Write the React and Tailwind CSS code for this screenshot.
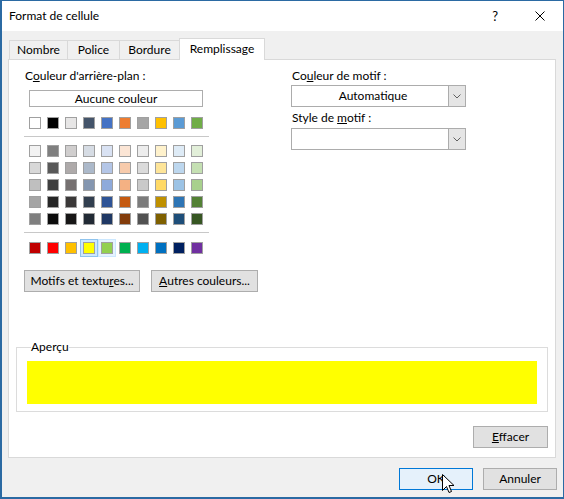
import React from "react";

const FONT = { fontFamily: 'Lato, "Noto Sans", sans-serif' };

const THEME = ["#ffffff", "#000000", "#e7e6e6", "#44546a", "#4472c4", "#ed7d31", "#a5a5a5", "#ffc000", "#5b9bd5", "#70ad47"];

const TINTS = [
  ["#f2f2f2", "#7f7f7f", "#d0cece", "#d6dce4", "#d9e2f3", "#fbe5d5", "#ededed", "#fff2cc", "#deebf6", "#e2efd9"],
  ["#d8d8d8", "#595959", "#aeaaaa", "#acb9ca", "#b4c6e7", "#f7cbac", "#dbdbdb", "#fee599", "#bdd7ee", "#c5e0b3"],
  ["#bfbfbf", "#3f3f3f", "#757070", "#8496b0", "#8eaadb", "#f4b183", "#c9c9c9", "#ffd965", "#9cc3e5", "#a8d08d"],
  ["#a5a5a5", "#262626", "#3a3838", "#323f4f", "#2f5496", "#c55a11", "#7b7b7b", "#bf9000", "#2e75b5", "#538135"],
  ["#7f7f7f", "#0c0c0c", "#171616", "#222a35", "#1f3864", "#833c0b", "#525252", "#7f6000", "#1e4e79", "#375623"],
];

const STANDARD = ["#c00000", "#ff0000", "#ffc000", "#ffff00", "#92d050", "#00b050", "#00b0f0", "#0070c0", "#002060", "#7030a0"];

function Swatch({ color, selected, hover }) {
  let ring = "";
  if (selected) ring = "shadow-[0_0_0_2px_#cce8ff,0_0_0_3px_#8fc4ee]";
  else if (hover) ring = "shadow-[0_0_0_2px_#e5f3ff,0_0_0_3px_#cce8ff]";
  return (
    <span
      className={`block w-[12px] h-[12px] border border-[#a0a0a0] ${ring}`}
      style={{ backgroundColor: color }}
    />
  );
}

function Tab({ label, width, active }) {
  if (active) {
    return (
      <div
        className={`${width} h-[22px] -ml-px -mb-px relative z-10 bg-white border border-b-0 border-[#d9d9d9] flex items-center justify-center pb-[2px]`}
      >
        {label}
      </div>
    );
  }
  return (
    <div
      className={`${width} h-[19px] -ml-px first:ml-0 border border-b-0 border-[#d9d9d9] flex items-center justify-center`}
    >
      {label}
    </div>
  );
}

function Combo({ value }) {
  return (
    <div className="w-[175px] h-[22px] bg-white border border-[#acacac] flex">
      <div className="flex-1 flex items-center justify-center pl-[6px]">{value}</div>
      <div className="w-[17px] h-full bg-[#e5e5e5] border-l border-[#acacac] flex items-center justify-center">
        <svg width="8" height="5" viewBox="0 0 8 5">
          <path d="M0.5 0.5 L4 4 L7.5 0.5" fill="none" stroke="#606060" strokeWidth="1" />
        </svg>
      </div>
    </div>
  );
}

function Button({ children, className = "" }) {
  return (
    <div
      className={`h-[22px] bg-[#e1e1e1] border border-[#adadad] flex items-center justify-center ${className}`}
    >
      {children}
    </div>
  );
}

export default function App() {
  return (
    <div
      className="w-[564px] h-[499px] bg-[#f0f0f0] border border-[#2b6aa3] border-l-2 border-b-2 flex flex-col text-[12px] text-black leading-[16px] relative overflow-hidden"
      style={FONT}
    >
      {/* title bar */}
      <div className="h-[30px] bg-white flex items-center shrink-0">
        <span className="ml-[7px]">Format de cellule</span>
        <span className="ml-auto mr-[37px] text-[13px]">?</span>
        <svg width="10" height="10" viewBox="0 0 10 10" className="mr-[18px]">
          <path d="M0.5 0.5 L9.5 9.5 M9.5 0.5 L0.5 9.5" stroke="#000" strokeWidth="1" />
        </svg>
      </div>

      {/* body */}
      <div className="flex-1 flex flex-col pt-[7px] pl-[6px]">
        <div className="flex items-end pl-px">
          <Tab label="Nombre" width="w-[59px]" />
          <Tab label="Police" width="w-[53px]" />
          <Tab label="Bordure" width="w-[61px]" />
          <Tab label="Remplissage" width="w-[86px]" active />
        </div>

        <div className="w-[548px] h-[399px] bg-white border border-[#d9d9d9] flex flex-col">
          <div className="flex pt-[8px]">
            {/* left column */}
            <div className="ml-[15px] w-[185px] flex flex-col">
              <div className="ml-px">
                C<u>o</u>uleur d'arrière-plan :
              </div>
              <div className="ml-[5px] mt-[6px] w-[174px] h-[17px] border border-[#adadad] flex items-center justify-center">
                Aucune couleur
              </div>
              <div className="ml-[5px] mt-[10px] flex gap-[6px]">
                {THEME.map((c) => (
                  <Swatch key={c} color={c} />
                ))}
              </div>
              <div className="mt-[7px] h-px bg-[#c8c8c8]" />
              <div className="ml-[5px] mt-[8px] flex flex-col gap-[5px]">
                {TINTS.map((row, i) => (
                  <div key={i} className="flex gap-[6px]">
                    {row.map((c, j) => (
                      <Swatch key={j} color={c} />
                    ))}
                  </div>
                ))}
              </div>
              <div className="mt-[7px] h-px bg-[#c8c8c8]" />
              <div className="ml-[5px] mt-[9px] flex gap-[6px]">
                {STANDARD.map((c, i) => (
                  <Swatch key={c} color={c} selected={i === 3} hover={i === 4} />
                ))}
              </div>
            </div>

            {/* right column */}
            <div className="ml-[82px] flex flex-col">
              <div className="ml-px">
                Co<u>u</u>leur de motif :
              </div>
              <div className="mt-[1px]">
                <Combo value="Automatique" />
              </div>
              <div className="ml-px mt-[3px]">
                Style de <u>m</u>otif :
              </div>
              <div className="mt-[2px]">
                <Combo value="" />
              </div>
            </div>
          </div>

          <div className="flex gap-[11px] ml-[15px] mt-[16px]">
            <Button className="w-[116px]">
              Motifs et textu<u>r</u>es...
            </Button>
            <Button className="w-[107px]">
              <u>A</u>utres couleurs...
            </Button>
          </div>

          <fieldset className="ml-[7px] mt-[48px] w-[532px] border border-[#dcdcdc] px-[10px] pb-[7px] pt-[7px]">
            <legend className="ml-[4px] px-0 leading-[14px]">Aperçu</legend>
            <div className="h-[43px] bg-[#ffff00]" />
          </fieldset>

          <div className="flex justify-end mt-[14px] mr-[7px]">
            <Button className="w-[75px]">
              <u>E</u>ffacer
            </Button>
          </div>
        </div>

        {/* footer */}
        <div className="flex justify-end gap-[10px] mt-[10px] mr-[6px]">
          <div className="w-[74px] h-[22px] bg-[#e5f1fb] border border-[#0078d7] flex items-center justify-center">
            OK
          </div>
          <Button className="w-[74px]">Annuler</Button>
        </div>
      </div>

      {/* mouse pointer */}
      <svg
        width="13"
        height="21"
        viewBox="0 0 13 21"
        className="absolute left-[440px] top-[473px]"
      >
        <path
          d="M0.5 0.5 L0.5 16.5 L4.5 12.5 L7 18.5 L9.5 17.5 L7 11.5 L12 11.5 Z"
          fill="#fff"
          stroke="#000"
          strokeWidth="1"
          strokeLinejoin="miter"
        />
      </svg>
    </div>
  );
}
